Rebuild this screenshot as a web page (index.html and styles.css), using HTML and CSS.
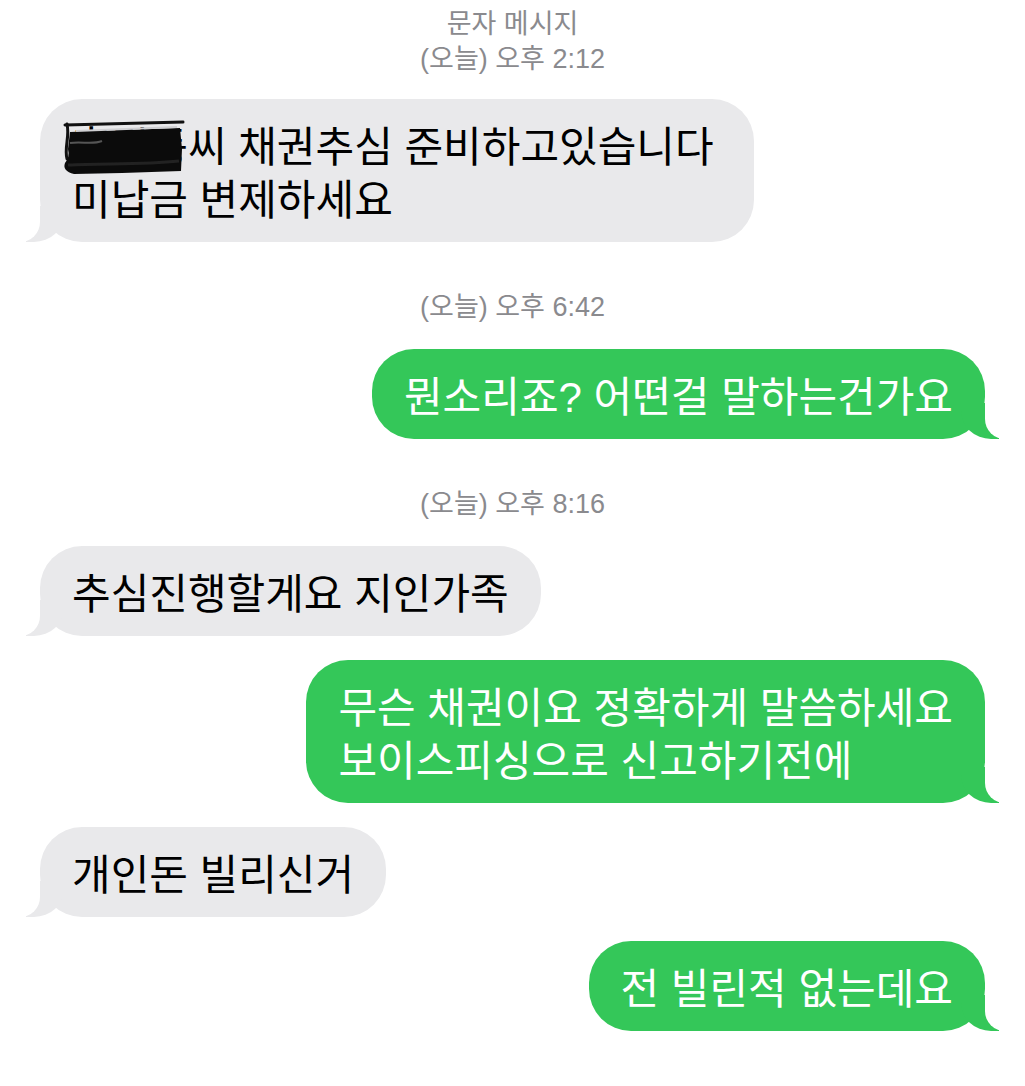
FILE: index.html
```html
<!DOCTYPE html>
<html lang="ko">
<head>
<meta charset="utf-8">
<title>문자 메시지</title>
<link rel="stylesheet" href="styles.css">
</head>
<body>
<div class="thread">
  <div class="meta meta-first">
    <div>문자 메시지</div>
    <div>(오늘) 오후 2:12</div>
  </div>
  <div class="msg recv wide"><span class="redact">홍길동<svg class="scribble" width="124" height="58" viewBox="0 0 124 58"><path d="M3 6 L121 3" stroke="#111" stroke-width="3" fill="none" stroke-linecap="round"/><path d="M5 5 C8 18 2 28 5 40" stroke="#111" stroke-width="3" fill="none" stroke-linecap="round"/><path d="M8 13 L118 9 L120 30 L119 52 L60 54 L12 55 Q0 52 3 44 Q8 38 6 30 Z" fill="#0b0b0b"/><path d="M14 12 L115 8" stroke="#cfcfd2" stroke-width="2" fill="none"/><path d="M8 24 C20 22 30 26 40 22" stroke="#555" stroke-width="2" fill="none"/><path d="M6 46 C40 44 80 46 117 42" stroke="#222" stroke-width="3" fill="none"/></svg></span>씨 채권추심 준비하고있습니다<br>미납금 변제하세요</div>

  <div class="meta">(오늘) 오후 6:42</div>
  <div class="msg sent">뭔소리죠? 어떤걸 말하는건가요</div>

  <div class="meta">(오늘) 오후 8:16</div>
  <div class="msg recv">추심진행할게요 지인가족</div>
  <div class="msg sent">무슨 채권이요 정확하게 말씀하세요<br>보이스피싱으로 신고하기전에</div>
  <div class="msg recv">개인돈 빌리신거</div>
  <div class="msg sent">전 빌린적 없는데요</div>
</div>
</body>
</html>
```

FILE: styles.css
```css
html, body {
  margin: 0;
  padding: 0;
  background: #ffffff;
}

body {
  font-family: "Liberation Sans", "Noto Sans CJK KR", sans-serif;
}

.thread {
  display: flex;
  flex-direction: column;
  gap: 24px;
  padding: 5px 40px 40px;
}

.meta {
  align-self: center;
  text-align: center;
  font-size: 27px;
  line-height: 35px;
  color: #8a8a8e;
  margin-top: 24px;
}

.meta div {
  padding-top: 2px;
  margin-bottom: -2px;
}

.meta-first {
  margin-top: 0;
}

.msg {
  position: relative;
  font-size: 42px;
  line-height: 53px;
  padding: 22px 32px 15px;
  border-radius: 42px;
  white-space: nowrap;
}

.msg.wide {
  padding-right: 40px;
}

.recv {
  align-self: flex-start;
  background: #e9e9eb;
  color: #000000;
}

.sent {
  align-self: flex-end;
  background: #34c759;
  color: #ffffff;
}

/* bubble tails */
.msg::before,
.msg::after {
  content: "";
  position: absolute;
  bottom: 0;
  height: 36px;
}

.sent::before {
  right: -14px;
  width: 38px;
  background: #34c759;
  border-bottom-left-radius: 30px 28px;
}

.sent::after {
  right: -48px;
  width: 48px;
  background: #ffffff;
  border-bottom-left-radius: 20px;
}

.recv::before {
  left: -14px;
  width: 38px;
  background: #e9e9eb;
  border-bottom-right-radius: 30px 28px;
}

.recv::after {
  left: -48px;
  width: 48px;
  background: #ffffff;
  border-bottom-right-radius: 20px;
}

.redact {
  position: relative;
}

.scribble {
  position: absolute;
  left: -10px;
  top: -5px;
}
```
